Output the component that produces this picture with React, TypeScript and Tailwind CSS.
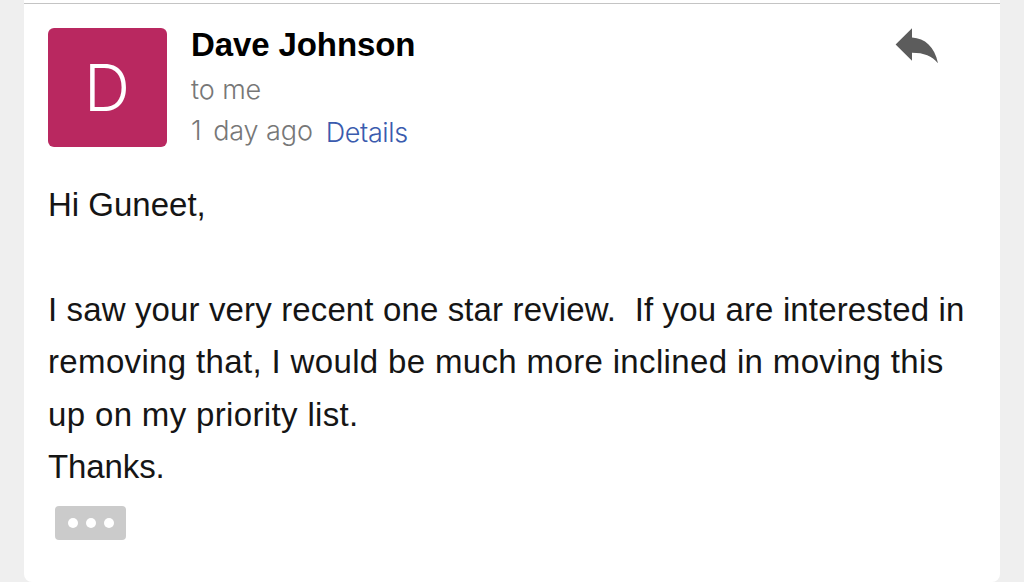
interface Message {
  sender: string;
  recipient: string;
  sentAt: string;
}

const message: Message = {
  sender: "Dave Johnson",
  recipient: "to me",
  sentAt: "1 day ago",
};

function ReplyIcon() {
  return (
    <svg width="44" height="36" viewBox="0 0 44 36" className="block">
      <path d="M0.6 16.5 L17 0.2 V9.6 C30 10.5 39.5 18.5 43 35.2 C37 28 29 24.8 17 24.8 V32.8 Z" fill="#5c5c5c" />
    </svg>
  );
}

export default function App() {
  return (
    <div className="h-[582px] w-[1024px] overflow-hidden bg-[#efefef] px-6 font-['Liberation_Sans',Arial,sans-serif]">
      <div className="h-full rounded-b-lg bg-white pt-[3px]">
        <div className="border-t border-[#c4c4c4] px-6 pt-6">

          {/* Header */}
          <header className="flex h-[119px] items-start">
            <div className="flex size-[119px] shrink-0 items-center justify-center rounded-md bg-[#b92860] pr-px font-['Inter',sans-serif] text-[64px] leading-none font-light text-white">
              D
            </div>
            <div className="ml-6 flex flex-col">
              <h1 className="h-[43px] text-[33px] leading-[34px] font-bold tracking-[-0.1px] whitespace-nowrap text-black">
                {message.sender}
              </h1>
              <p className="h-[41px] font-['Inter',sans-serif] text-[27px] leading-[38px] font-light tracking-[-0.1px] whitespace-nowrap text-[#777]">
                {message.recipient}
              </p>
              <div className="flex font-['Inter',sans-serif] text-[27px] leading-[38px] font-light whitespace-nowrap text-[#777]">
                <span className="tracking-[-0.1px] first-letter:tracking-[4px]">{message.sentAt}</span>
                <a className="ml-[13px] pt-0.5 tracking-[-0.4px] text-[#3a5bae]">Details</a>
              </div>
            </div>
            <button className="mr-[37px] ml-auto">
              <ReplyIcon />
            </button>
          </header>

          {/* Body */}
          <div className="mt-8 text-[33px] leading-[52.4px] whitespace-pre text-[#151515]">
            <p>Hi Guneet,</p>
            <p>{" "}</p>
            <p className="tracking-[0.13px]">I saw your very recent one star review.  If you are interested in</p>
            <p className="tracking-[0.35px]">removing that, I would be much more inclined in moving this</p>
            <p className="tracking-[0.35px]">up on my priority list.</p>
            <p className="tracking-[-0.1px]">Thanks.</p>
          </div>

          {/* Quoted text toggle */}
          <button className="mt-[13px] ml-[7px] flex h-[34px] w-[71px] items-center justify-center gap-2 rounded bg-[#cbcbcb]">
            <span className="size-2.5 rounded-full bg-white" />
            <span className="size-2.5 rounded-full bg-white" />
            <span className="size-2.5 rounded-full bg-white" />
          </button>
        </div>
      </div>
    </div>
  );
}
